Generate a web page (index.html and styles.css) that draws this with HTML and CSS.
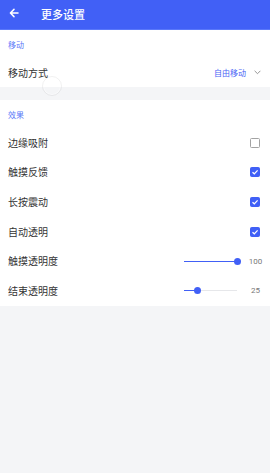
FILE: index.html
```html
<!DOCTYPE html>
<html lang="zh">
<head>
<meta charset="utf-8">
<link rel="stylesheet" href="styles.css">
</head>
<body>
<header class="appbar">
  <svg class="back" width="10" height="10" viewBox="0 0 10 10"><path d="M9 5H1.6M5 1.4L1.4 5L5 8.6" fill="none" stroke="#fff" stroke-width="1.5" stroke-linecap="round" stroke-linejoin="round"/></svg>
  <span class="title">更多设置</span>
</header>
<section class="group">
  <div class="group-label">移动</div>
  <div class="row">
    <span class="row-label">移动方式</span>
    <span class="row-right"><span class="select-value">自由移动</span>
      <svg class="chev" width="7" height="5" viewBox="0 0 7 5"><path d="M0.6 0.8L3.5 3.7L6.4 0.8" fill="none" stroke="#8a8a8a" stroke-width="0.9"/></svg>
    </span>
  </div>
  <span class="ripple"></span>
</section>
<section class="group">
  <div class="group-label">效果</div>
  <div class="row"><span class="row-label">边缘吸附</span><span class="check"></span></div>
  <div class="row"><span class="row-label">触摸反馈</span><span class="check on"><svg width="8" height="8" viewBox="0 0 8 8"><path d="M1.5 4.2L3.3 5.8L6.6 2.3" fill="none" stroke="#fff" stroke-width="1.2"/></svg></span></div>
  <div class="row"><span class="row-label">长按震动</span><span class="check on"><svg width="8" height="8" viewBox="0 0 8 8"><path d="M1.5 4.2L3.3 5.8L6.6 2.3" fill="none" stroke="#fff" stroke-width="1.2"/></svg></span></div>
  <div class="row"><span class="row-label">自动透明</span><span class="check on"><svg width="8" height="8" viewBox="0 0 8 8"><path d="M1.5 4.2L3.3 5.8L6.6 2.3" fill="none" stroke="#fff" stroke-width="1.2"/></svg></span></div>
  <div class="row"><span class="row-label">触摸透明度</span>
    <span class="slider-wrap"><span class="slider"><span class="fill" style="width:100%"></span><span class="thumb" style="left:100%"></span></span><span class="val">100</span></span>
  </div>
  <div class="row"><span class="row-label">结束透明度</span>
    <span class="slider-wrap"><span class="slider"><span class="fill" style="width:25%"></span><span class="thumb" style="left:25%"></span></span><span class="val">25</span></span>
  </div>
</section>
</body>
</html>
```
FILE: styles.css
```css
* { box-sizing: border-box; }
html, body { margin: 0; padding: 0; }
body {
  background: #f4f5f7;
  font-family: "Noto Sans CJK SC", "Noto Sans", Roboto, sans-serif;
  color: #333;
  width: 270px;
  min-height: 473px;
}
.appbar {
  height: 30px;
  background: #4160f6;
  display: flex;
  align-items: center;
  padding-left: 9px;
  border-bottom: 1px solid #5a78fa;
}
.back { display: block; margin-top: -3px; }
.title {
  color: #fff;
  font-size: 11px;
  font-weight: 500;
  margin-left: 22px;
  line-height: 1;
  margin-top: -1px;
}
.group {
  background: #fff;
  position: relative;
  margin-bottom: 13px;
}
.group-label {
  height: 28px;
  display: flex;
  align-items: center;
  padding-left: 8px;
  font-size: 8px;
  color: #5a78f8;
}
.row {
  height: 29.6px;
  display: flex;
  align-items: center;
  justify-content: space-between;
  padding-left: 8px;
  padding-right: 10px;
}
.group:first-of-type .row { height: 29px; }
.row-label { font-size: 10px; color: #333; line-height: 1; }
.row-right { display: flex; align-items: center; margin-right: -1px; }
.select-value { font-size: 8px; color: #4763f5; line-height: 1; }
.chev { margin-left: 8px; display: block; }
.check {
  width: 10px; height: 10px;
  border: 1.2px solid #a3a3a3;
  border-radius: 1.5px;
  display: flex; align-items: center; justify-content: center;
}
.check.on { background: #4160f6; border-color: #4160f6; }
.check svg { display: block; }
.slider-wrap { display: flex; align-items: center; margin-right: -2.5px; }
.slider {
  position: relative;
  width: 53px;
  height: 1.3px;
  background: #e6e7ea;
  margin-right: 11.5px;
}
.fill { position: absolute; left: 0; top: 0; bottom: 0; background: #4160f6; }
.thumb {
  position: absolute;
  top: 50%;
  width: 7px; height: 7px;
  margin-left: -3.5px; margin-top: -3.5px;
  border-radius: 50%;
  background: #4160f6;
}
.val {
  width: 14px;
  text-align: center;
  font-family: Roboto, "Noto Sans", sans-serif;
  font-size: 8px;
  color: #777;
}
.ripple {
  position: absolute;
  left: 42px; top: 46px;
  width: 20px; height: 20px;
  border-radius: 50%;
  border: 1px solid rgba(0,0,0,0.06);
  box-shadow: inset 0 0 0 1px rgba(255,255,255,0.5);
}
```
